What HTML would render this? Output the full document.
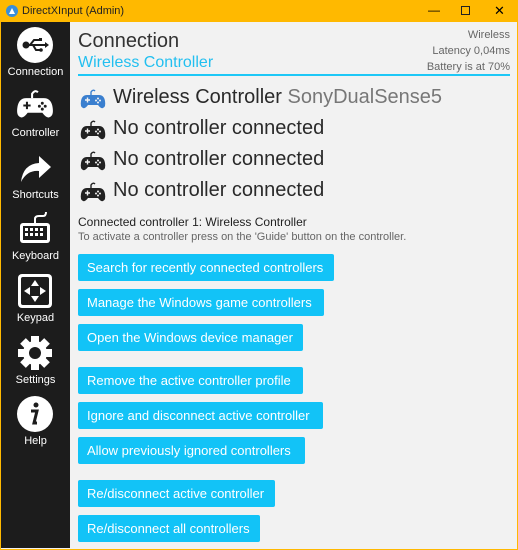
<!DOCTYPE html>
<html><head><meta charset="utf-8"><style>
*{margin:0;padding:0;box-sizing:border-box}
body{width:518px;height:550px;overflow:hidden;background:#f2f2f2;font-family:"Segoe UI","Liberation Sans",sans-serif;position:relative}
#tb{position:absolute;left:0;top:0;width:518px;height:22px;background:#ffb900}
#tb .t{position:absolute;left:22px;top:5px;font-size:11px;color:#222}
#frame{position:absolute;left:0;top:22px;width:518px;height:528px;border:1px solid #ffb900;border-top:none}
#sb{position:absolute;left:1px;top:22px;width:69px;height:526px;background:#1c1c1c}
.lab{position:absolute;left:1px;width:69px;text-align:center;color:#fff;font-size:11px}
.ic{position:absolute;left:17px;width:36px;height:36px}
.a{position:absolute;white-space:nowrap}
.btn{position:absolute;left:78px;height:27px;background:#12c3f7;border-radius:2px;color:#fff;font-size:13px;line-height:27px;padding-left:9px}
.row{position:absolute;left:113px;font-size:20px;color:#2a2a2a;white-space:nowrap}
.gp{position:absolute;left:80px;width:26px;height:20px}
</style></head><body>
<svg width="0" height="0" style="position:absolute"><defs>
<symbol id="pad" viewBox="0 0 26 20"><path d="M15 2 q-2 -2 -4 1 v3" fill="none" stroke="currentColor" stroke-width="1.4"/><path d="M7 6 h12 q5 0 6 6 q1 6 -2 7 q-2 1 -5 -3 h-10 q-3 4 -5 3 q-3 -1 -2 -7 q1 -6 6 -6z" fill="currentColor"/><path d="M5 11h5M7.5 8.5v5" stroke="#f2f2f2" stroke-width="1.4"/><circle cx="18" cy="9.5" r="1" fill="#f2f2f2"/><circle cx="18" cy="13.5" r="1" fill="#f2f2f2"/><circle cx="16" cy="11.5" r="1" fill="#f2f2f2"/><circle cx="20" cy="11.5" r="1" fill="#f2f2f2"/></symbol>
<symbol id="padw" viewBox="0 0 26 20"><path d="M15 2 q-2 -2 -4 1 v3" fill="none" stroke="#fff" stroke-width="1.4"/><path d="M7 6 h12 q5 0 6 6 q1 6 -2 7 q-2 1 -5 -3 h-10 q-3 4 -5 3 q-3 -1 -2 -7 q1 -6 6 -6z" fill="#fff"/><path d="M5 11h5M7.5 8.5v5" stroke="#1c1c1c" stroke-width="1.4"/><circle cx="18" cy="9.5" r="1" fill="#1c1c1c"/><circle cx="18" cy="13.5" r="1" fill="#1c1c1c"/><circle cx="16" cy="11.5" r="1" fill="#1c1c1c"/><circle cx="20" cy="11.5" r="1" fill="#1c1c1c"/></symbol>
</defs></svg>
<div id="tb"><svg style="position:absolute;left:6px;top:5px" width="12" height="12"><circle cx="6" cy="6" r="6" fill="#3a8ed8"/><path d="M3 9 L6 3 L9 9z" fill="#fff"/></svg><span class="t">DirectXInput (Admin)</span>
<span class="a" style="left:428px;top:3px;font-size:12px">—</span>
<span class="a" style="left:461px;top:6px;width:9px;height:9px;border:1px solid #222"></span>
<span class="a" style="left:494px;top:3px;font-size:13px">✕</span></div>
<div id="frame"></div>
<div id="sb"></div>
<svg class="ic" style="top:27px" viewBox="0 0 36 36"><circle cx="18" cy="18" r="18" fill="#fff"/><circle cx="9" cy="18" r="3.5" fill="#1c1c1c"/><path d="M9 18h19M13 18l4-5h6M16 18l3 5h4" stroke="#1c1c1c" stroke-width="2" fill="none"/><path d="M28 15l4 3-4 3z" fill="#1c1c1c"/><rect x="22" y="11" width="3" height="3" fill="#1c1c1c"/><circle cx="24" cy="23" r="1.8" fill="#1c1c1c"/></svg>
<div class="lab" style="top:66px">Connection</div>
<svg class="ic" style="top:88px;left:16px;width:38px;height:32px" viewBox="0 0 26 20"><use href="#padw"/></svg>
<div class="lab" style="top:127px">Controller</div>
<svg class="ic" style="top:150px" viewBox="0 0 36 36"><path d="M4 32 Q6 14 22 13 V6 L34 17 L22 28 V21 Q10 20 4 32z" fill="#fff"/></svg>
<div class="lab" style="top:189px">Shortcuts</div>
<svg class="ic" style="top:210px" viewBox="0 0 36 36"><path d="M18 13 V9 q0-3 4-3 h4 q3 0 3-4" stroke="#fff" stroke-width="2" fill="none"/><rect x="3" y="13" width="30" height="20" rx="3" fill="#fff"/><rect x="6" y="16" width="24" height="14" fill="#1c1c1c"/><g fill="#fff"><rect x="8" y="18" width="3" height="3"/><rect x="13" y="18" width="3" height="3"/><rect x="18" y="18" width="3" height="3"/><rect x="23" y="18" width="3" height="3"/><rect x="8" y="23" width="3" height="3"/><rect x="13" y="23" width="3" height="3"/><rect x="18" y="23" width="3" height="3"/><rect x="23" y="23" width="3" height="3"/></g></svg>
<div class="lab" style="top:250px">Keyboard</div>
<svg class="ic" style="top:273px" viewBox="0 0 36 36"><rect x="1" y="1" width="34" height="34" rx="4" fill="#fff"/><rect x="4" y="4" width="28" height="28" rx="2" fill="#1c1c1c"/><g fill="#fff"><path d="M18 7l4 6h-8z"/><path d="M18 29l4-6h-8z"/><path d="M7 18l6-4v8z"/><path d="M29 18l-6-4v8z"/></g></svg>
<div class="lab" style="top:312px">Keypad</div>
<svg class="ic" style="top:335px" viewBox="0 0 36 36"><g fill="#fff" transform="translate(18 18)"><rect x="-4" y="-17" width="8" height="34"/><rect x="-4" y="-17" width="8" height="34" transform="rotate(45)"/><rect x="-4" y="-17" width="8" height="34" transform="rotate(90)"/><rect x="-4" y="-17" width="8" height="34" transform="rotate(135)"/><circle r="12"/></g><circle cx="18" cy="18" r="6" fill="#1c1c1c"/></svg>
<div class="lab" style="top:374px">Settings</div>
<svg class="ic" style="top:396px" viewBox="0 0 36 36"><circle cx="18" cy="18" r="18" fill="#fff"/><circle cx="19" cy="9" r="2.5" fill="#1c1c1c"/><path d="M14 15h6l-3 12h3" stroke="#1c1c1c" stroke-width="3" fill="none"/></svg>
<div class="lab" style="top:435px">Help</div>
<div class="a" style="left:78px;top:30px;font-size:20px;color:#333">Connection</div>
<div class="a" style="left:78px;top:54px;font-size:16px;color:#22bff0">Wireless Controller</div>
<div class="a" style="right:8px;top:27px;font-size:11px;color:#666;text-align:right;line-height:16px">Wireless<br>Latency 0,04ms<br>Battery is at 70%</div>
<div class="a" style="left:78px;top:74px;width:432px;height:2px;background:#1ec8f7"></div>
<svg class="gp" style="top:89px;color:#3a7fcf"><use href="#pad"/></svg>
<div class="row" style="top:86px">Wireless Controller <span style="color:#777">SonyDualSense5</span></div>
<svg class="gp" style="top:120px;color:#222"><use href="#pad"/></svg>
<div class="row" style="top:117px">No controller connected</div>
<svg class="gp" style="top:151px;color:#222"><use href="#pad"/></svg>
<div class="row" style="top:148px">No controller connected</div>
<svg class="gp" style="top:182px;color:#222"><use href="#pad"/></svg>
<div class="row" style="top:179px">No controller connected</div>
<div class="a" style="left:78px;top:215px;font-size:12px;color:#222">Connected controller 1: Wireless Controller</div>
<div class="a" style="left:78px;top:231px;font-size:11px;color:#666">To activate a controller press on the 'Guide' button on the controller.</div>
<div class="btn" style="top:254px;width:256px">Search for recently connected controllers</div>
<div class="btn" style="top:289px;width:246px">Manage the Windows game controllers</div>
<div class="btn" style="top:324px;width:225px">Open the Windows device manager</div>
<div class="btn" style="top:367px;width:225px">Remove the active controller profile</div>
<div class="btn" style="top:402px;width:245px">Ignore and disconnect active controller</div>
<div class="btn" style="top:437px;width:227px">Allow previously ignored controllers</div>
<div class="btn" style="top:480px;width:197px">Re/disconnect active controller</div>
<div class="btn" style="top:515px;width:182px">Re/disconnect all controllers</div>
</body></html>
